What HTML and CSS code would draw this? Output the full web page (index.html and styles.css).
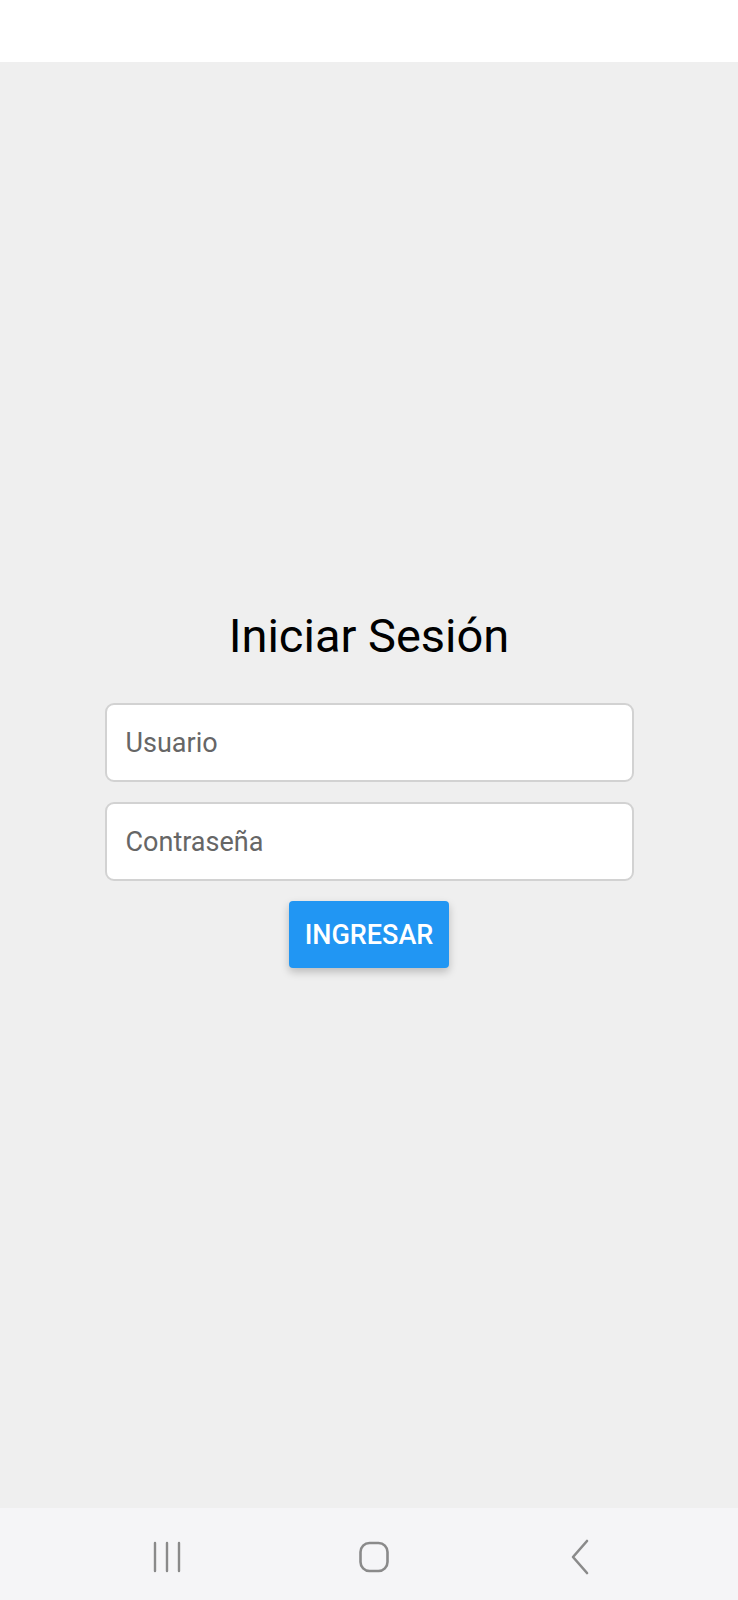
FILE: index.html
```html
<!DOCTYPE html>
<html lang="es">
<head>
<meta charset="utf-8">
<title>Iniciar Sesión</title>
<link rel="stylesheet" href="styles.css">
</head>
<body>
<div class="app">
  <header class="status"></header>
  <main class="main">
    <div class="login">
      <h1 class="title">Iniciar Sesión</h1>
      <div class="field"><span class="placeholder">Usuario</span></div>
      <div class="field"><span class="placeholder">Contraseña</span></div>
      <button class="btn">INGRESAR</button>
    </div>
  </main>
  <nav class="navbar">
    <svg class="nav-icon" width="30" height="32" viewBox="0 0 30 32">
      <path d="M3 2v28M15 2v28M27 2v28" stroke="#8a8a8a" stroke-width="2.4" stroke-linecap="round" fill="none"/>
    </svg>
    <svg class="nav-icon nav-home" width="32" height="32" viewBox="0 0 32 32">
      <rect x="2.5" y="2" width="27" height="28" rx="9" ry="9" stroke="#8a8a8a" stroke-width="2.6" fill="none"/>
    </svg>
    <svg class="nav-icon" width="22" height="36" viewBox="0 0 22 36">
      <path d="M18 2L4 18l14 16" stroke="#8a8a8a" stroke-width="2.6" stroke-linecap="round" stroke-linejoin="round" fill="none"/>
    </svg>
  </nav>
</div>
</body>
</html>
```
FILE: styles.css
```css
html, body {
  margin: 0;
  padding: 0;
}
body {
  font-family: Roboto, "Noto Sans", "Liberation Sans", sans-serif;
  width: 738px;
  height: 1600px;
  overflow: hidden;
}
.app {
  display: flex;
  flex-direction: column;
  height: 1600px;
}
.status {
  height: 62px;
  background: #ffffff;
  flex: none;
}
.main {
  flex: 1;
  background: #efefef;
  display: flex;
  align-items: center;
  justify-content: center;
}
.login {
  width: 529px;
  display: flex;
  flex-direction: column;
  align-items: center;
}
.title {
  margin: 0 0 33px;
  font-size: 47px;
  font-weight: 400;
  line-height: 68px;
  color: #000;
}
.field {
  box-sizing: border-box;
  width: 529px;
  height: 79px;
  background: #fff;
  border: 2px solid #d2d2d2;
  border-radius: 9px;
  display: flex;
  align-items: center;
  padding-left: 19px;
  margin-bottom: 20px;
}
.placeholder {
  font-size: 27px;
  color: #666;
}
.btn {
  width: 160px;
  height: 67px;
  border: none;
  border-radius: 4px;
  background: #2196f3;
  color: #fff;
  font-family: Roboto, "Noto Sans", sans-serif;
  font-size: 27px;
  font-weight: 500;
  padding: 0;
  box-shadow: 0 4px 8px rgba(0, 0, 0, 0.22);
}
.navbar {
  height: 92px;
  box-sizing: border-box;
  flex: none;
  background: #f5f5f7;
  display: flex;
  align-items: center;
  justify-content: space-between;
  padding: 6px 147px 0 152px;
}
.nav-icon {
  display: block;
}
.nav-home {
  margin-right: 4px;
}
```
